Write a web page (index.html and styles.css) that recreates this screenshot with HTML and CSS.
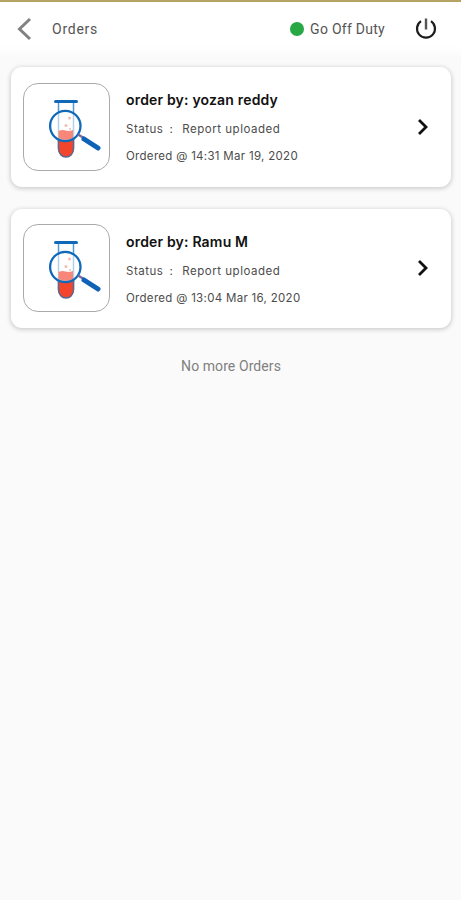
FILE: index.html
```html
<!DOCTYPE html>
<html lang="en">
<head>
<meta charset="utf-8">
<title>Orders</title>
<link rel="stylesheet" href="styles.css">
</head>
<body>
<svg class="defs" width="0" height="0" aria-hidden="true">
  <symbol id="sample" viewBox="0 0 87 88">
    <path d="M35.5 19v46a7.500 7.500 0 0 0 15 0V19" fill="#fff" stroke="#4f9bd6" stroke-width="1.500"/>
    <path d="M35.500 56h15v10a7.500 8 0 0 1-15 0z" fill="#f3452c" stroke="#5a6791" stroke-width="1.400"/>
    <circle cx="42.300" cy="43" r="15" fill="#fff" fill-opacity=".55"/>
    <path d="M35.500 48q3.500-1.500 7-.5t7.500-.5v8q-6.500 3.500-14.500 0z" fill="#f88779"/>
    <g fill="#eebdb3"><circle cx="46.500" cy="35" r="1.500"/><circle cx="43" cy="42.500" r="1.500"/><circle cx="47" cy="46" r="1"/></g>
    <circle cx="42.300" cy="43" r="15.200" fill="none" stroke="#1069b8" stroke-width="2.300"/>
    <path d="M32.500 18.500h21" stroke="#1069b8" stroke-width="3" stroke-linecap="round"/>
    <path d="M55 51.500l5 3" stroke="#7b6b9b" stroke-width="2.500"/>
    <path d="M61 56l14 9" stroke="#0f62b5" stroke-width="5" stroke-linecap="round"/>
  </symbol>
</svg>
<header class="bar">
  <svg class="back" viewBox="0 0 16 24"><path d="M14 2L3.500 12 14 22" fill="none" stroke="#828282" stroke-width="3"/></svg>
  <h1 class="heading">Orders</h1>
  <span class="dot"></span>
  <span class="duty">Go Off Duty</span>
  <svg class="power" viewBox="0 0 22 22"><path d="M6 3.200a9 9 0 1 0 10 0" fill="none" stroke="#1c1c1c" stroke-width="2.200"/><path d="M11 .5v11" stroke="#555" stroke-width="2.400"/></svg>
</header>
<main class="list">
  <article class="card">
    <div class="thumb"><svg viewBox="0 0 87 88"><use href="#sample"/></svg></div>
    <div class="info">
      <h2 class="name">order by: yozan reddy</h2>
      <p class="row"><span class="label">Status</span><span class="colon">:</span><span>Report uploaded</span></p>
      <p class="row time">Ordered @ 14:31 Mar 19, 2020</p>
    </div>
    <svg class="next" viewBox="0 0 12 18"><path d="M2 2l7 7-7 7" fill="none" stroke="#111" stroke-width="2.800"/></svg>
  </article>
  <article class="card">
    <div class="thumb"><svg viewBox="0 0 87 88"><use href="#sample"/></svg></div>
    <div class="info">
      <h2 class="name">order by: Ramu M</h2>
      <p class="row"><span class="label">Status</span><span class="colon">:</span><span>Report uploaded</span></p>
      <p class="row time">Ordered @ 13:04 Mar 16, 2020</p>
    </div>
    <svg class="next" viewBox="0 0 12 18"><path d="M2 2l7 7-7 7" fill="none" stroke="#111" stroke-width="2.800"/></svg>
  </article>
  <p class="end">No more Orders</p>
</main>
</body>
</html>
```
FILE: styles.css
```css
* { box-sizing: border-box; margin: 0; padding: 0; }
body { min-height: 900px; background: #fafafa; font-family: Inter, sans-serif; color: #4c4c4c; }
.defs { position: absolute; }
.bar {
  display: flex; align-items: center; height: 57px;
  padding: 0 24px 1px 16px; border-top: 2px solid #b5a364;
  background: linear-gradient(#fff 80%, #fafafa);
  font-family: Roboto, sans-serif;
}
.back { width: 16px; height: 24px; margin-top: -1px; }
.heading { flex: 1; margin-left: 20px; font-size: 14px; font-weight: 400; letter-spacing: .75px; color: #555; }
.dot { width: 14px; height: 14px; margin-top: -1px; border-radius: 50%; background: #28a745; }
.duty { margin: 0 30px 0 6px; font-size: 14px; letter-spacing: .27px; color: #555; }
.power { width: 22px; height: 22px; margin-top: -1px; }
.list { display: flex; flex-direction: column; gap: 22px; padding: 10px 10px 0 11px; }
.card {
  display: flex; align-items: center; height: 119.500px; padding: 0 22px 0 12px;
  border-radius: 11px; background: #fff; box-shadow: 0 1px 4px 1px rgba(0, 0, 0, .17);
}
.thumb { width: 87px; height: 88px; border: 1px solid #aaa; border-radius: 15px; }
.thumb svg { display: block; width: 87px; height: 88px; margin: -1px; }
.info { flex: 1; margin: 2px 0 0 16px; }
.name { font-size: 14px; line-height: 20px; font-weight: 600; letter-spacing: .18px; color: #111; }
.row { display: flex; margin-top: 10px; font-size: 11.500px; line-height: 18px; letter-spacing: .52px; white-space: nowrap; }
.row.time { margin-top: 9px; letter-spacing: .3px; }
.colon { margin: 0 9px 0 6px; }
.next { width: 12px; height: 18px; }
.end { margin-top: 6px; text-align: center; font-size: 14px; line-height: 20px; font-family: Roboto, sans-serif; letter-spacing: .08px; color: #808080; }
```
